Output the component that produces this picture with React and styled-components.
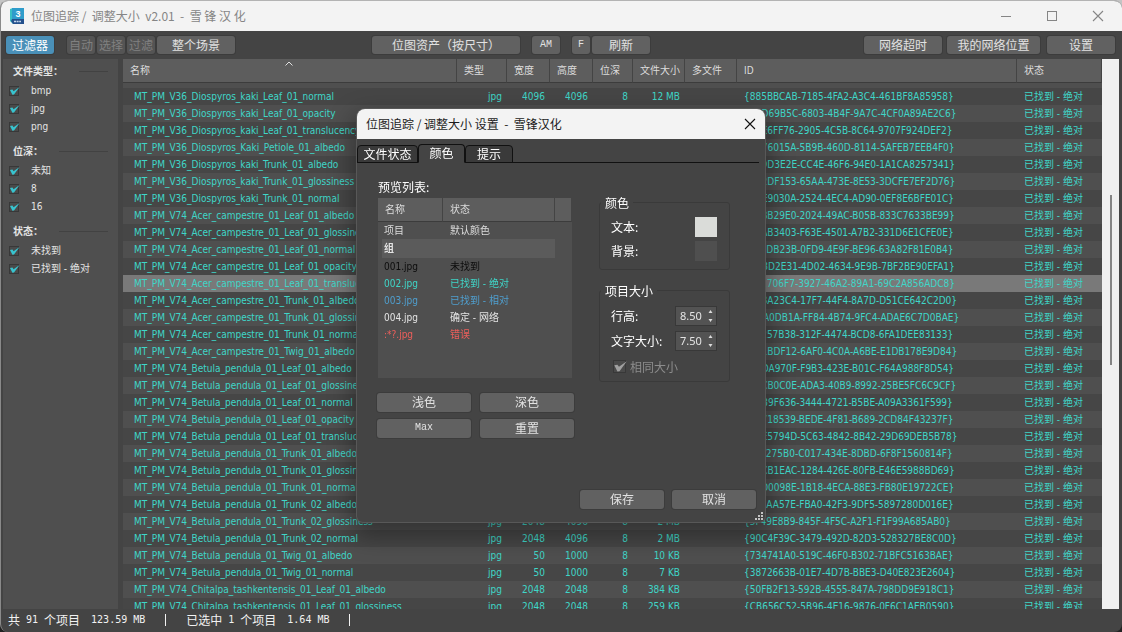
import styled, { createGlobalStyle } from "styled-components";
import { useState } from "react";

const GlobalStyle = createGlobalStyle`
  * {
    box-sizing: border-box;
  }

  body {
    margin: 0;
    background: linear-gradient(#c4c4c4 40px, #222 60px);
    font-family: "Liberation Sans", "Noto Sans CJK SC", sans-serif;
    font-size: 12px;
    color: #e4e4e4;
  }

  button, input {
    font-family: inherit;
    margin: 0;
  }
`;

const smallFont = `"DejaVu Sans Condensed", "Noto Sans CJK SC", sans-serif`;
const cjkFont = `"Noto Sans CJK SC", sans-serif`;
const teal = "#3fd6c8";

/* main window */

const Window = styled.div`
  height: 100vh;
  display: flex;
  flex-direction: column;
  overflow: hidden;
  background: #444;
  border-top: 1px solid #b3b3b3;
  border-left: 1px solid #8a8a8a;
  border-radius: 8px;
`;

const TitleBar = styled.header`
  height: 30px;
  flex-shrink: 0;
  display: flex;
  align-items: center;
  gap: 6px;
  padding: 0 18px 0 8px;
  background: #f3f3f3;
  color: #858585;
`;

const WindowTitle = styled.h1`
  flex: 1;
  margin: 0;
  font: 400 12px/30px ${cjkFont};
  white-space: pre;
`;

const WindowButtons = styled.div`
  display: flex;
  gap: 34px;
`;

const WindowButton = styled.button`
  width: 12px;
  height: 12px;
  padding: 0;
  border: none;
  background: none;
  color: ${({ dark }) => (dark ? "#111" : "#858585")};

  svg {
    display: block;
  }
`;

const Toolbar = styled.div`
  height: 28px;
  flex-shrink: 0;
  display: flex;
  align-items: center;
  padding: 0 7px 0 5px;
`;

const ToolGroup = styled.div`
  display: flex;
  gap: ${({ gap }) => gap || 2}px;
  flex: 0 0 ${({ basis }) => basis || "auto"};
  margin-left: ${({ end }) => (end ? "auto" : 0)};
`;

const Button = styled.button`
  width: ${({ w }) => (w ? `${w}px` : "auto")};
  height: ${({ h }) => h || 18}px;
  padding: 0;
  border: none;
  border-radius: 3px;
  box-shadow: 0 0 0 1px #3c3c3c;
  background: ${({ active }) => (active ? "#4a90b8" : "#616161")};
  color: ${({ active }) => (active ? "#fff" : "#e2e2e2")};
  font: 12px/18px ${cjkFont};
  white-space: nowrap;
  margin-right: ${({ space }) => space || 0}px;

  &:disabled {
    background: #545454;
    color: #808080;
  }
`;

const MonoButton = styled(Button)`
  font: 10px/18px "Liberation Mono", monospace;
`;

const Main = styled.div`
  flex: 1;
  min-height: 0;
  display: flex;
  padding: 0 3px 0 2px;
`;

const Sidebar = styled.aside`
  width: 115px;
  flex-shrink: 0;
  margin-right: 5px;
  padding: 2px 10px 0 6px;
  display: flex;
  flex-direction: column;
  gap: 5px;
  background: #4f4f4f;
  font: 10px/18px ${smallFont};
`;

const FilterTitle = styled.h2`
  display: flex;
  align-items: center;
  gap: 16px;
  margin: 0 0 1px 4px;
  font: 700 10px/20px ${cjkFont};

  &::after {
    content: "";
    flex: 1;
    height: 1px;
    background: #424242;
  }
`;

const FilterLabel = styled.label`
  height: 18px;
  display: flex;
  align-items: center;
  gap: 12px;
`;

const TickBox = styled.span`
  display: inline-grid;
  width: ${({ size }) => size}px;
  height: ${({ size }) => size}px;
  color: ${({ tint }) => tint};

  input, svg {
    grid-area: 1 / 1;
    width: 100%;
    height: 100%;
  }

  input {
    appearance: none;
    border: 1px solid #383838;
    background: #4a4a4a;
  }

  svg {
    visibility: hidden;
    overflow: visible;
    pointer-events: none;
  }

  input:checked + svg {
    visibility: visible;
  }
`;

/* bitmap table */

const TableArea = styled.div`
  flex: 1;
  min-width: 0;
  overflow: hidden;
  background: #4f4f4f;
`;

const Table = styled.table`
  width: 100%;
  table-layout: fixed;
  border-collapse: separate;
  border-spacing: 0;
  font: 10px/17px ${smallFont};
  color: ${teal};

  tbody::before {
    content: "";
    display: block;
    height: 5px;
  }
`;

const HeadCell = styled.th`
  width: ${({ w }) => (w ? `${w}px` : "auto")};
  height: 24px;
  padding: 0 0 0 7px;
  border-right: 1px solid #444;
  border-bottom: 1px solid #3c3c3c;
  background: #5d5d5d;
  color: #dcdcdc;
  font-weight: 400;
  text-align: left;
  white-space: nowrap;
`;

const NameHead = styled.div`
  position: relative;

  svg {
    position: absolute;
    top: -1px;
    left: 50%;
    margin-left: -8px;
  }
`;

const Row = styled.tr`
  background: ${({ selected }) => (selected ? "#797979" : "#464646")};

  &:nth-child(even) {
    background: ${({ selected }) => (selected ? "#797979" : "#4f4f4f")};
  }
`;

const Cell = styled.td`
  height: 17px;
  padding: 0 ${({ right }) => right || 0}px 0 ${({ left }) => left || 0}px;
  text-align: ${({ right }) => (right ? "right" : "left")};
  white-space: nowrap;
  overflow: hidden;
`;

const ScrollTrack = styled.div`
  width: 17px;
  flex-shrink: 0;
  padding: 136px 7px 0 8px;
  background: #f0f0f0;
`;

const ScrollThumb = styled.div`
  height: 170px;
  background: #858585;
`;

const StatusBar = styled.footer`
  height: 23px;
  flex-shrink: 0;
  display: flex;
  align-items: center;
  gap: 6px;
  padding: 0 7px 2px;
  font: 12px/20px ${cjkFont};
  color: #f2f2f2;
`;

const Figure = styled.span`
  margin-left: ${({ space }) => space || 0}px;
  font: 10px/20px "DejaVu Sans Mono", monospace;
`;

const Divider = styled.span`
  width: 1px;
  height: 12px;
  margin: 0 14px;
  background: #f2f2f2;
`;

/* settings dialog */

const Overlay = styled.div`
  position: fixed;
  inset: 0;
  display: flex;
  align-items: center;
  justify-content: center;
  padding-bottom: 2px;
`;

const Dialog = styled.section`
  position: relative;
  width: 408px;
  overflow: hidden;
  background: #444;
  border-radius: 8px 8px 6px 6px;
  box-shadow: 0 0 0 1px #585858, 0 10px 24px 4px rgba(0, 0, 0, 0.35);
  font: 12px/18px ${cjkFont};
  color: #fff;
`;

const DialogTitle = styled.header`
  height: 30px;
  display: flex;
  align-items: center;
  justify-content: space-between;
  padding: 0 9px;
  background: #f3f3f3;
  color: #1c1c1c;
`;

const DialogName = styled.h2`
  margin: 0;
  font: 400 12px/30px ${cjkFont};
  white-space: pre;
`;

const Tabs = styled.div`
  height: 24px;
  display: flex;
  align-items: flex-end;
  margin: 0 6px 0 0;
  box-shadow: inset 0 -1px 0 #111;
`;

const Tab = styled.button`
  width: ${({ w }) => w}px;
  height: ${({ active }) => (active ? 19 : 18)}px;
  padding: 0;
  border: 1px solid #111;
  border-bottom-color: ${({ active }) => (active ? "#444" : "#111")};
  border-radius: 4px 4px 0 0;
  background: ${({ active }) => (active ? "#444" : "#3a3a3a")};
  color: #fff;
  font: 12px/16px ${cjkFont};
`;

const Columns = styled.div`
  display: flex;
  gap: 25px;
  padding: 15px 35px 0 20px;
`;

const PreviewColumn = styled.div`
  width: 197px;
`;

const PreviewLabel = styled.p`
  margin: 0 0 2px 1px;
`;

const PreviewBox = styled.div`
  width: 194px;
  height: 180px;
  margin-left: 1px;
  background: #4f4f4f;
`;

const PreviewTable = styled(Table)`
  tbody::before {
    display: none;
  }

  td {
    padding-left: 7px;
  }

  td:first-child {
    padding-left: 6px;
  }
`;

const PreviewRow = styled.tr`
  color: ${({ tint }) => tint};
`;

const GroupCell = styled.td`
  height: 17px;
  font-weight: 700;
  background: linear-gradient(#5b5b5b, #5b5b5b) 4px 0 / 173px 100% no-repeat;
`;

const PresetGrid = styled.div`
  display: grid;
  grid-template-columns: 1fr 1fr;
  gap: 7px 9px;
  margin-top: 15px;
`;

const OptionColumn = styled.div`
  flex: 1;
  padding-top: 16px;
`;

const Group = styled.fieldset`
  height: ${({ h }) => h}px;
  margin: 0 0 12px;
  padding: ${({ top }) => top}px 12px 0 11px;
  border: 1px solid #3a3a3a;
  border-radius: 3px;
  min-width: 0;

  legend {
    padding: 0 4px;
    margin-left: -10px;
    line-height: 18px;
  }
`;

const Option = styled.div`
  height: ${({ h }) => h}px;
  display: flex;
  align-items: center;
  justify-content: space-between;
`;

const Swatch = styled.input`
  appearance: none;
  width: 22px;
  height: 20px;
  padding: 0;
  border: none;
  background: none;

  &::-webkit-color-swatch-wrapper {
    padding: 0;
  }

  &::-webkit-color-swatch {
    border: none;
  }
`;

const Spin = styled.span`
  width: 42px;
  height: 20px;
  display: flex;
  align-items: center;
  border: 1px solid #383838;
  background: #535353;

  input {
    width: 31px;
    padding: 0 0 0 4px;
    border: none;
    background: none;
    color: #e4e4e4;
    font: 11px/16px "Noto Sans", sans-serif;
    appearance: textfield;
  }

  input::-webkit-inner-spin-button {
    display: none;
  }
`;

const SameSize = styled.label`
  height: 26px;
  display: flex;
  align-items: center;
  gap: 4px;
  margin-left: 2px;
  color: #8c8c8c;
`;

const DialogFooter = styled.div`
  display: flex;
  justify-content: flex-end;
  gap: 8px;
  padding: 52px 9px 13px;
`;

const Grip = styled.svg`
  position: absolute;
  right: 1px;
  bottom: 1px;
`;

const filters = [
  { title: "文件类型：", items: ["bmp", "jpg", "png"] },
  { title: "位深：", items: ["未知", "8", "16"] },
  { title: "状态：", items: ["未找到", "已找到 - 绝对"] },
];

const columns = [
  ["类型", 50],
  ["宽度", 43],
  ["高度", 43],
  ["位深", 40],
  ["文件大小", 52],
  ["多文件", 52],
  ["ID", 280],
  ["状态", 85],
];

// name, width, height, size, id
const bitmaps = [
  ["V36_Diospyros_kaki_Leaf_01_normal", 4096, 4096, "12 MB", "885BBCAB-7185-4FA2-A3C4-461BF8A85958"],
  ["V36_Diospyros_kaki_Leaf_01_opacity", 4096, 4096, "2 MB", "B1D69B5C-6803-4B4F-9A7C-4CF0A89AE2C6"],
  ["V36_Diospyros_kaki_Leaf_01_translucency", 4096, 4096, "9 MB", "A2E6FF76-2905-4C5B-8C64-9707F924DEF2"],
  ["V36_Diospyros_Kaki_Petiole_01_albedo", 2048, 2048, "2 MB", "4C76015A-5B9B-460D-8114-5AFEB7EEB4F0"],
  ["V36_Diospyros_kaki_Trunk_01_albedo", 2048, 4096, "5 MB", "5B9D3E2E-CC4E-46F6-94E0-1A1CA8257341"],
  ["V36_Diospyros_kaki_Trunk_01_glossiness", 2048, 4096, "2 MB", "7A2DF153-65AA-473E-8E53-3DCFE7EF2D76"],
  ["V36_Diospyros_kaki_Trunk_01_normal", 2048, 4096, "6 MB", "C1E9030A-2524-4EC4-AD90-0EF8E6BFE01C"],
  ["V74_Acer_campestre_01_Leaf_01_albedo", 4096, 4096, "8 MB", "63BB29E0-2024-49AC-B05B-833C7633BE99"],
  ["V74_Acer_campestre_01_Leaf_01_glossiness", 4096, 4096, "3 MB", "20AB3403-F63E-4501-A7B2-331D6E1CFE0E"],
  ["V74_Acer_campestre_01_Leaf_01_normal", 4096, 4096, "9 MB", "9F1DB23B-0FD9-4E9F-BE96-63A82F81E0B4"],
  ["V74_Acer_campestre_01_Leaf_01_opacity", 4096, 4096, "2 MB", "D48D2E31-4D02-4634-9E9B-7BF2BE90EFA1"],
  ["V74_Acer_campestre_01_Leaf_01_translucency", 4096, 4096, "2 MB", "E51706F7-3927-46A2-89A1-69C2A856ADC8"],
  ["V74_Acer_campestre_01_Trunk_01_albedo", 2048, 4096, "5 MB", "0B8A23C4-17F7-44F4-8A7D-D51CE642C2D0"],
  ["V74_Acer_campestre_01_Trunk_01_glossiness", 2048, 4096, "2 MB", "DCA0DB1A-FF84-4B74-9FC4-ADAE6C7D0BAE"],
  ["V74_Acer_campestre_01_Trunk_01_normal", 2048, 4096, "6 MB", "31257B38-312F-4474-BCD8-6FA1DEE83133"],
  ["V74_Acer_campestre_01_Twig_01_albedo", 50, 1000, "9 KB", "A41BDF12-6AF0-4C0A-A6BE-E1DB178E9D84"],
  ["V74_Betula_pendula_01_Leaf_01_albedo", 2048, 2048, "2 MB", "C7DA970F-F9B3-423E-B01C-F64A988F8D54"],
  ["V74_Betula_pendula_01_Leaf_01_glossiness", 2048, 2048, "1 MB", "8ECB0C0E-ADA3-40B9-8992-25BE5FC6C9CF"],
  ["V74_Betula_pendula_01_Leaf_01_normal", 2048, 2048, "3 MB", "4D39F636-3444-4721-B5BE-A09A3361F599"],
  ["V74_Betula_pendula_01_Leaf_01_opacity", 2048, 2048, "1 MB", "6A718539-BEDE-4F81-B689-2CD84F43237F"],
  ["V74_Betula_pendula_01_Leaf_01_translucency", 2048, 2048, "2 MB", "B0E5794D-5C63-4842-8B42-29D69DEB5B78"],
  ["V74_Betula_pendula_01_Trunk_01_albedo", 2048, 4096, "6 MB", "FA1275B0-C017-434E-8DBD-6F8F1560814F"],
  ["V74_Betula_pendula_01_Trunk_01_glossiness", 2048, 4096, "2 MB", "33CB1EAC-1284-426E-80FB-E46E5988BD69"],
  ["V74_Betula_pendula_01_Trunk_01_normal", 2048, 4096, "6 MB", "91D0098E-1B18-4ECA-88E3-FB80E19722CE"],
  ["V74_Betula_pendula_01_Trunk_02_albedo", 2048, 4096, "6 MB", "2FEAA57E-FBA0-42F3-9DF5-5897280D016E"],
  ["V74_Betula_pendula_01_Trunk_02_glossiness", 2048, 4096, "2 MB", "5F49E8B9-845F-4F5C-A2F1-F1F99A685AB0"],
  ["V74_Betula_pendula_01_Trunk_02_normal", 2048, 4096, "2 MB", "90C4F39C-3479-492D-82D3-528327BE8C0D"],
  ["V74_Betula_pendula_01_Twig_01_albedo", 50, 1000, "10 KB", "734741A0-519C-46F0-B302-71BFC5163BAE"],
  ["V74_Betula_pendula_01_Twig_01_normal", 50, 1000, "7 KB", "3872663B-01E7-4D7B-BBE3-D40E823E2604"],
  ["V74_Chitalpa_tashkentensis_01_Leaf_01_albedo", 2048, 2048, "384 KB", "50FB2F13-592B-4555-847A-798DD9E918C1"],
  ["V74_Chitalpa_tashkentensis_01_Leaf_01_glossiness", 2048, 2048, "259 KB", "CB656C52-5B96-4E16-9876-0F6C1AEB0590"],
];

const previewRows = [
  ["001.jpg", "未找到", "#0c0c0c"],
  ["002.jpg", "已找到 - 绝对", teal],
  ["003.jpg", "已找到 - 相对", "#4f9fcf"],
  ["004.jpg", "确定 - 网络", "#e4e4e4"],
  [":*?.jpg", "错误", "#ee5f5b"],
];

function Tick({ size, tint, ...rest }) {
  return (
    <TickBox size={size} tint={tint}>
      <input type="checkbox" defaultChecked {...rest} />
      <svg viewBox="0 0 10 10">
        <path d="M1 4 L3.4 3.6 L4.6 5.2 L10.6 1 L5 8.6 L3.4 8.8 Z" fill="currentColor" />
      </svg>
    </TickBox>
  );
}

function CloseIcon() {
  return (
    <svg width="12" height="12" viewBox="0 0 12 12">
      <path d="M1 1 L11 11 M11 1 L1 11" stroke="currentColor" strokeWidth="1.1" />
    </svg>
  );
}

function Logo() {
  return (
    <svg width="16" height="17" viewBox="0 0 16 17">
      <path d="M1 1 L4 0 V16 L1 13 Z" fill="#37c0c4" />
      <rect x="3" y="0" width="12" height="11" fill="#2f9ccb" />
      <path d="M3 11 H15 V16 H4 L2 13 Z" fill="#24508c" />
      <text x="9" y="9" fill="#fff" fontSize="9" fontWeight="700" textAnchor="middle" fontFamily="Liberation Sans">3</text>
      <path d="M5 13.5 H12" stroke="#c6d6ea" strokeWidth="1.4" strokeDasharray="2 0.6" />
    </svg>
  );
}

function SpinBox({ id, value }) {
  const [amount, setAmount] = useState(value);
  return (
    <Spin>
      <input id={id} type="number" step="0.5" value={amount} onChange={(e) => setAmount(e.target.value)} />
      <svg width="7" height="14" viewBox="0 0 7 14">
        <path d="M1.5 4 L3.5 1 L5.5 4 Z M1.5 10 L3.5 13 L5.5 10 Z" fill="#dcdcdc" />
      </svg>
    </Spin>
  );
}

function Filters() {
  return (
    <Sidebar>
      {filters.map(({ title, items }) => (
        <div key={title}>
          <FilterTitle>{title}</FilterTitle>
          {items.map((item) => (
            <FilterLabel key={item}>
              <Tick size={10} tint="#38c4cf" />
              {item}
            </FilterLabel>
          ))}
        </div>
      ))}
    </Sidebar>
  );
}

function BitmapTable() {
  return (
    <TableArea>
      <Table>
        <thead>
          <tr>
            <HeadCell>
              <NameHead>
                名称
                <svg width="8" height="5" viewBox="0 0 8 5">
                  <path d="M0.5 4.5 L4 1 L7.5 4.5" fill="none" stroke="#e0e0e0" />
                </svg>
              </NameHead>
            </HeadCell>
            {columns.map(([label, w], i) => (
              <HeadCell key={i} w={w}>{label}</HeadCell>
            ))}
          </tr>
        </thead>
        <tbody>
          {bitmaps.map(([name, width, height, size, id], i) => (
            <Row key={id} selected={i === 11}>
              <Cell left={11}>MT_PM_{name}</Cell>
              <Cell right={5}>jpg</Cell>
              <Cell right={5}>{width}</Cell>
              <Cell right={5}>{height}</Cell>
              <Cell right={5}>8</Cell>
              <Cell right={5}>{size}</Cell>
              <Cell />
              <Cell left={7}>{`{${id}}`}</Cell>
              <Cell left={7}>已找到 - 绝对</Cell>
            </Row>
          ))}
        </tbody>
      </Table>
    </TableArea>
  );
}

function SettingsDialog() {
  return (
    <Overlay>
      <Dialog role="dialog" aria-labelledby="settings-title">
        <DialogTitle>
          <DialogName id="settings-title">位图追踪 / 调整大小 设置  -  雪锋汉化</DialogName>
          <WindowButton dark aria-label="关闭">
            <CloseIcon />
          </WindowButton>
        </DialogTitle>
        <Tabs role="tablist">
          <Tab role="tab" w={61}>文件状态</Tab>
          <Tab role="tab" w={47} active aria-selected="true">颜色</Tab>
          <Tab role="tab" w={48}>提示</Tab>
        </Tabs>
        <Columns>
          <PreviewColumn>
            <PreviewLabel>预览列表:</PreviewLabel>
            <PreviewBox>
              <PreviewTable>
                <thead>
                  <tr>
                    <HeadCell w={65}>名称</HeadCell>
                    <HeadCell w={112}>状态</HeadCell>
                    <HeadCell />
                  </tr>
                </thead>
                <tbody>
                  <PreviewRow tint="#dcdcdc">
                    <Cell>项目</Cell>
                    <Cell>默认颜色</Cell>
                    <Cell />
                  </PreviewRow>
                  <PreviewRow tint="#e4e4e4">
                    <GroupCell colSpan={3}>组</GroupCell>
                  </PreviewRow>
                  {previewRows.map(([name, state, tint]) => (
                    <PreviewRow key={name} tint={tint}>
                      <Cell>{name}</Cell>
                      <Cell>{state}</Cell>
                      <Cell />
                    </PreviewRow>
                  ))}
                </tbody>
              </PreviewTable>
            </PreviewBox>
            <PresetGrid>
              <Button h={19}>浅色</Button>
              <Button h={19}>深色</Button>
              <MonoButton h={19}>Max</MonoButton>
              <Button h={19}>重置</Button>
            </PresetGrid>
          </PreviewColumn>
          <OptionColumn>
            <Group h={76} top={3}>
              <legend>颜色</legend>
              <Option h={24}>
                <label htmlFor="text-color">文本:</label>
                <Swatch id="text-color" type="color" defaultValue="#dadcd9" />
              </Option>
              <Option h={24}>
                <label htmlFor="back-color">背景:</label>
                <Swatch id="back-color" type="color" defaultValue="#4f4f4f" />
              </Option>
            </Group>
            <Group h={100} top={4}>
              <legend>项目大小</legend>
              <Option h={25}>
                <label htmlFor="row-height">行高:</label>
                <SpinBox id="row-height" value="8.50" />
              </Option>
              <Option h={25}>
                <label htmlFor="text-size">文字大小:</label>
                <SpinBox id="text-size" value="7.50" />
              </Option>
              <SameSize>
                <Tick size={13} tint="#a0a0a0" disabled />
                相同大小
              </SameSize>
            </Group>
          </OptionColumn>
        </Columns>
        <DialogFooter>
          <Button w={84} h={19}>保存</Button>
          <Button w={84} h={19}>取消</Button>
        </DialogFooter>
        <Grip width="9" height="9" viewBox="0 0 9 9">
          <path d="M6 0h2v2h-2z M3 3h2v2h-2z M6 3h2v2h-2z M0 6h2v2h-2z M3 6h2v2h-2z M6 6h2v2h-2z" fill="#c4c4c4" />
        </Grip>
      </Dialog>
    </Overlay>
  );
}

function App() {
  return (
    <>
      <GlobalStyle />
      <Window>
        <TitleBar>
          <Logo />
          <WindowTitle>位图追踪 /  调整大小  v2.01  -  雪 锋 汉 化</WindowTitle>
          <WindowButtons>
            <WindowButton aria-label="最小化">
              <svg width="12" height="12" viewBox="0 0 12 12">
                <path d="M1 6.5 H11" stroke="currentColor" />
              </svg>
            </WindowButton>
            <WindowButton aria-label="最大化">
              <svg width="12" height="12" viewBox="0 0 12 12">
                <rect x="1.5" y="1.5" width="9" height="9" fill="none" stroke="currentColor" />
              </svg>
            </WindowButton>
            <WindowButton aria-label="关闭">
              <CloseIcon />
            </WindowButton>
          </WindowButtons>
        </TitleBar>
        <Toolbar>
          <ToolGroup basis="33%">
            <Button w={48} active space={11}>过滤器</Button>
            <Button w={28} disabled>自动</Button>
            <Button w={28} disabled>选择</Button>
            <Button w={28} disabled>过滤</Button>
            <Button w={78}>整个场景</Button>
          </ToolGroup>
          <ToolGroup>
            <Button w={148} space={10}>位图资产（按尺寸）</Button>
            <MonoButton w={28} space={10}>AM</MonoButton>
            <MonoButton w={18}>F</MonoButton>
            <Button w={58}>刷新</Button>
          </ToolGroup>
          <ToolGroup end gap={5}>
            <Button w={78}>网络超时</Button>
            <Button w={93} space={2}>我的网络位置</Button>
            <Button w={68}>设置</Button>
          </ToolGroup>
        </Toolbar>
        <Main>
          <Filters />
          <BitmapTable />
          <ScrollTrack>
            <ScrollThumb />
          </ScrollTrack>
        </Main>
        <StatusBar>
          共
          <Figure>91</Figure>
          个项目
          <Figure space={5}>123.59 MB</Figure>
          <Divider />
          已选中
          <Figure>1</Figure>
          个项目
          <Figure space={5}>1.64 MB</Figure>
          <Divider />
        </StatusBar>
      </Window>
      <SettingsDialog />
    </>
  );
}

export default App;
